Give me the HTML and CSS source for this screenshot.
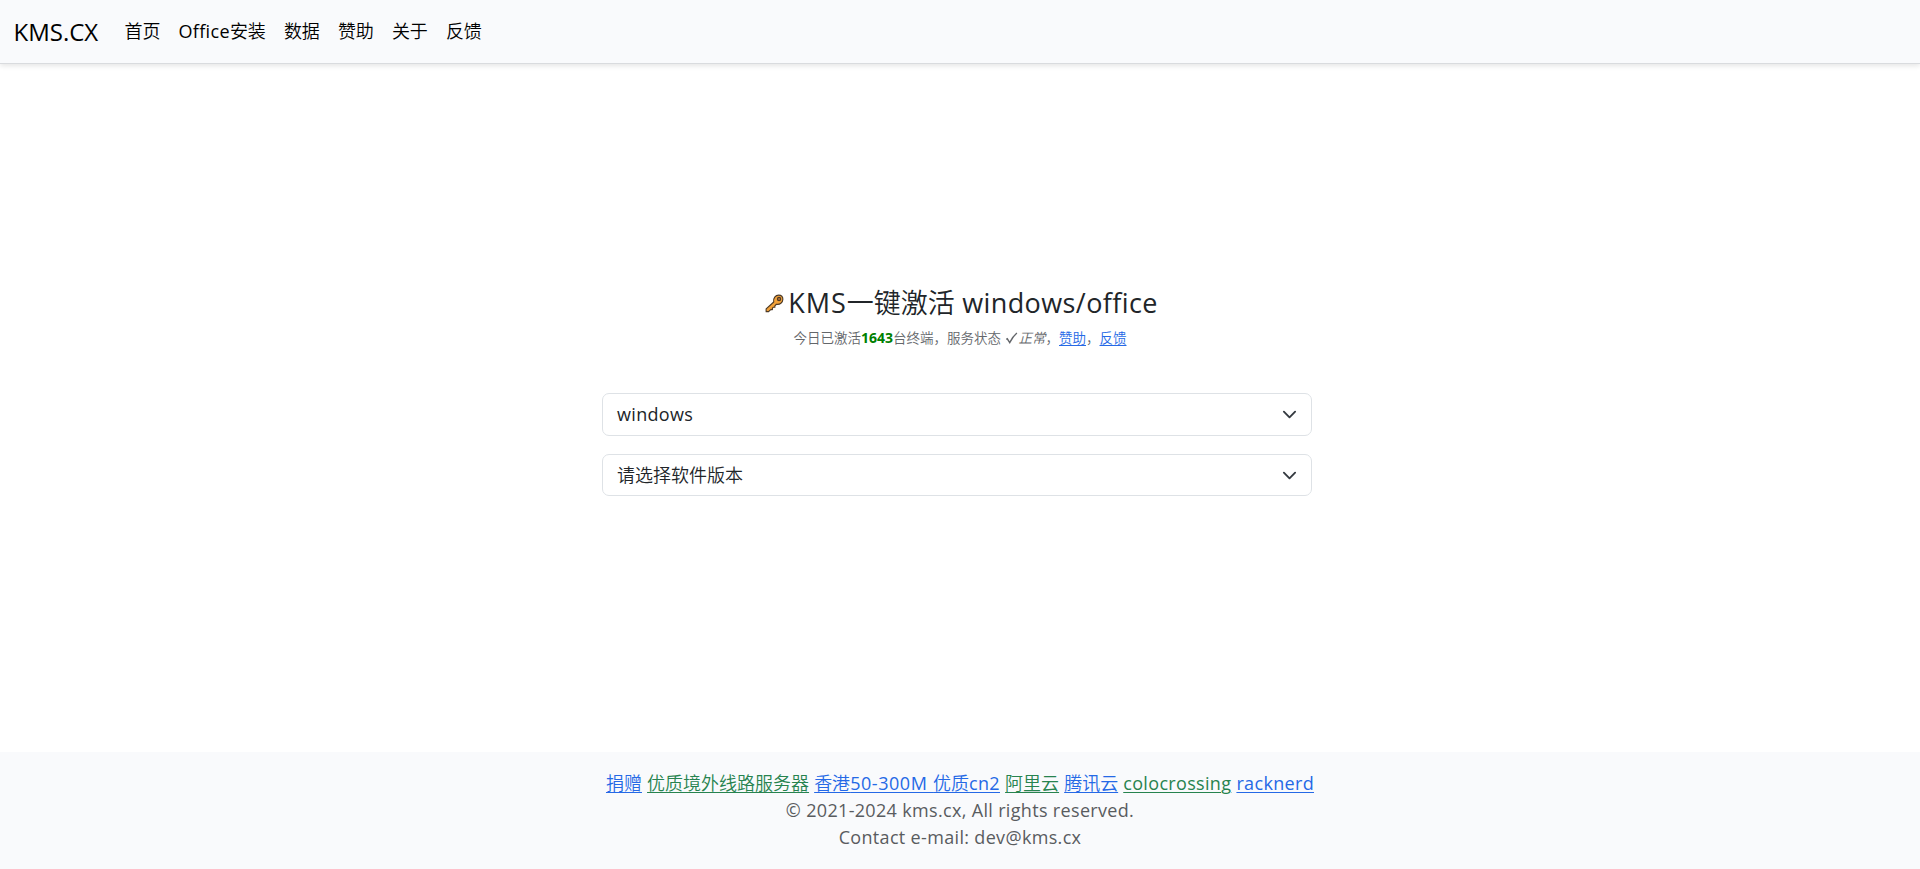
FILE: index.html
```html
<!DOCTYPE html>
<html lang="zh-CN">
<head>
    <meta charset="UTF-8">
    <meta name="viewport" content="width=device-width, initial-scale=1.0">
    <title>KMS一键激活 windows/office</title>
    <link rel="stylesheet" href="styles.css">
</head>
<body>
    <header class="navbar">
        <a class="navbar-brand" href="#">KMS.CX</a>
        <nav>
            <ul class="navbar-nav">
                <li><a href="#">首页</a></li>
                <li><a href="#"><span class="en">Office</span>安装</a></li>
                <li><a href="#">数据</a></li>
                <li><a href="#">赞助</a></li>
                <li><a href="#">关于</a></li>
                <li><a href="#">反馈</a></li>
            </ul>
        </nav>
    </header>

    <main>
        <h1>
            <svg class="key" viewBox="0 0 20 20" aria-hidden="true">
                <path d="M1.2 18.6V15.6L9.2 8.4C8.4 4.6 11 1.2 14.4 1.2C17 1.2 18.8 3 18.8 5.6C18.8 9 15.6 11.6 12 10.8L10.4 12.4V14H8.6L7.8 14.8V16.4H6L3.8 18.6Z" fill="#f2a23a" stroke="#4d3a26" stroke-width="1.2" stroke-linejoin="round"/>
                <circle cx="14.8" cy="5.2" r="1.7" fill="#b87333" stroke="#4d3a26" stroke-width="1.2"/>
            </svg>
            <span class="en kms">KMS</span>一键激活<span class="en"> windows/office</span>
        </h1>
        <p class="status">今日已激活<b>1643</b>台终端，服务状态 <svg class="check" viewBox="0 0 12 13" aria-hidden="true"><path d="M.8 7.4L1.8 6.8L4.2 10.6C6 7 8 3.8 11.4 1" fill="none" stroke="currentColor" stroke-width="1.4"/></svg><i>正常</i>，<a href="#">赞助</a>，<a href="#">反馈</a></p>

        <form>
            <div class="form-select">
                <span class="en">windows</span>
                <svg viewBox="0 0 16 16" aria-hidden="true"><path d="m2 5 6 6 6-6"/></svg>
            </div>
            <div class="form-select second">
                <span>请选择软件版本</span>
                <svg viewBox="0 0 16 16" aria-hidden="true"><path d="m2 5 6 6 6-6"/></svg>
            </div>
        </form>
    </main>

    <footer>
        <p class="links">
            <a href="#">捐赠</a>
            <a class="green" href="#">优质境外线路服务器</a>
            <a href="#">香港<span class="en speed">50-300M </span>优质<span class="en">cn2</span></a>
            <a class="green" href="#">阿里云</a>
            <a href="#">腾讯云</a>
            <a class="green en" href="#">colocrossing</a>
            <a class="en" href="#">racknerd</a>
        </p>
        <p class="en">© 2021-2024 kms.cx, All rights reserved.</p>
        <p class="en">Contact e-mail: dev@kms.cx</p>
    </footer>
</body>
</html>
```
FILE: styles.css
```css
* {
    box-sizing: border-box;
}
body {
    display: flex;
    flex-direction: column;
    min-height: 100vh;
    margin: 0;
    font-family: "Open Sans", "Noto Sans CJK SC", sans-serif;
    font-size: 18px;
    font-weight: 350;
    line-height: 27px;
    color: #212529;
    background: #fff;
}
.en {
    font-weight: 370;
    letter-spacing: 0.33px;
}
a {
    color: #2569e6;
    text-underline-offset: 2px;
    text-decoration-thickness: 1px;
}

/* top bar */
.navbar {
    display: flex;
    align-items: center;
    height: 64px;
    padding: 0 13.5px;
    background: #f9fafc;
    border-bottom: 1px solid #d9dbde;
    box-shadow: 0 2px 5px rgba(0, 0, 0, 0.1);
}
.navbar-brand {
    width: 84.5px;
    margin-right: 17.5px;
    padding-bottom: 1px;
    font-size: 24px;
    font-weight: 400;
    white-space: nowrap;
    color: #000;
    text-decoration: none;
}
.navbar-nav {
    display: flex;
    margin: 0;
    padding: 0;
    list-style: none;
}
.navbar-nav a {
    display: block;
    padding: 9px;
    color: #000;
    text-decoration: none;
}

main {
    flex: 1;
    padding-top: 221px;
    text-align: center;
}
h1 {
    display: flex;
    align-items: center;
    justify-content: center;
    margin: 0;
    font-size: 27px;
    font-weight: 350;
    line-height: 36px;
    white-space: pre;
}
h1 .en {
    letter-spacing: 0.4px;
}
h1 .kms {
    letter-spacing: 1px;
}
.key {
    width: 19px;
    height: 19px;
    margin: 0 4px 0 3px;
}
.status {
    margin: 6px 0 0;
    font-size: 13.5px;
    line-height: 22px;
    color: #63666a;
}
.status b {
    font-size: 14px;
    font-weight: 700;
    color: green;
}
.check {
    width: 13px;
    height: 13px;
    margin-right: 1px;
    vertical-align: -2px;
}
form {
    display: flex;
    flex-direction: column;
    gap: 18px;
    width: 710px;
    margin: 44px 0 0 602px;
}
.form-select {
    display: flex;
    align-items: center;
    justify-content: space-between;
    height: 43px;
    padding: 0 14px;
    border: 1px solid #dee2e6;
    border-radius: 7px;
}
.form-select.second {
    height: 42px;
}
.form-select svg {
    width: 15px;
    height: 15px;
    fill: none;
    stroke: #343a40;
    stroke-width: 2;
    stroke-linecap: round;
    stroke-linejoin: round;
}

footer {
    padding: 18px 0;
    text-align: center;
    color: #595c5f;
    background: #f9fafc;
}
footer p {
    margin: 0;
}
.links {
    word-spacing: 0.4px;
}
.speed {
    letter-spacing: 0.55px;
}
.green {
    color: #27834f;
}
```
